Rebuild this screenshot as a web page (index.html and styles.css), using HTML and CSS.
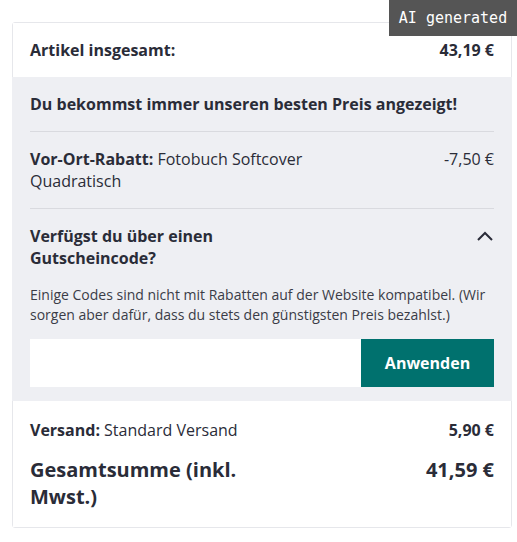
FILE: index.html
```html
<!DOCTYPE html>
<html lang="de">
<head>
<meta charset="utf-8">
<title>Warenkorb</title>
<link rel="stylesheet" href="styles.css">
</head>
<body>
<div class="page">
  <div class="card">
    <div class="sec white">
      <div class="row bold"><span>Artikel insgesamt:</span><span>43,19 €</span></div>
    </div>
    <div class="sec gray">
      <div class="block">
        <div class="bold">Du bekommst immer unseren besten Preis angezeigt!</div>
      </div>
      <div class="block">
        <div class="row"><span class="label"><b>Vor-Ort-Rabatt:</b> Fotobuch Softcover Quadratisch</span><span>-7,50 €</span></div>
      </div>
      <div class="block last">
        <div class="row"><span class="label short bold">Verfügst du über einen Gutscheincode?</span>
          <svg class="chev" width="16" height="10" viewBox="0 0 16 10"><polyline points="1,9 8,2 15,9" fill="none" stroke="#2a2c38" stroke-width="2"/></svg>
        </div>
        <p class="note">Einige Codes sind nicht mit Rabatten auf der Website kompatibel. (Wir sorgen aber dafür, dass du stets den günstigsten Preis bezahlst.)</p>
        <div class="form"><input class="code" type="text" aria-label="Gutscheincode"><button class="apply">Anwenden</button></div>
      </div>
    </div>
    <div class="sec white foot">
      <div class="row"><span><b>Versand:</b> Standard Versand</span><span class="bold">5,90 €</span></div>
      <div class="row total"><span class="label">Gesamtsumme (inkl. Mwst.)</span><span>41,59 €</span></div>
    </div>
  </div>
</div>
<div class="badge">AI generated</div>
</body>
</html>
```
FILE: styles.css
```css
html, body { margin: 0; padding: 0; background: #fff; }
body { font-family: "Open Sans", "Noto Sans", sans-serif; color: #2a2c38; font-size: 16px; line-height: 22px; }
.page { padding: 22px 6px 0 12px; }
.card { width: 500px; border: 1px solid #e6e7eb; border-radius: 3px; box-sizing: border-box; }
.sec { padding: 16px 17px 16px 17px; }
.white { background: #fff; }
.gray { background: #eeeff3; margin: 0 -1px; padding: 0 18px 14px 18px; }
.row { display: flex; justify-content: space-between; align-items: flex-start; }
.bold, b { font-weight: 700; }
.label { max-width: 290px; }
.label.short { max-width: 210px; }
.block { padding: 16px 0; border-bottom: 1px solid #d9dadf; }
.block.last { border-bottom: none; padding-bottom: 0; }
.chev { margin-top: 6px; margin-right: 1px; }
.note { margin: 16px 0 15px; font-size: 14px; line-height: 19.5px; color: #3a3c47; }
.form { display: flex; height: 48px; }
.code { flex: 1; border: none; background: #fff; margin: 0; padding: 0 12px; outline: none; }
.apply { width: 133px; border: none; background: #00716e; color: #fff; font-family: "Open Sans", sans-serif; font-weight: 700; font-size: 16px; margin: 0; padding: 0; }
.foot { padding-top: 18px; padding-bottom: 17px; }
.total { margin-top: 15px; font-size: 20px; line-height: 27px; font-weight: 700; }
.total .label { max-width: 260px; }
.badge { position: absolute; top: 0; right: 0; width: 128px; height: 36px; background: #555; color: #fff; font-family: "DejaVu Sans Mono", monospace; font-size: 15px; line-height: 36px; text-align: center; }
```
